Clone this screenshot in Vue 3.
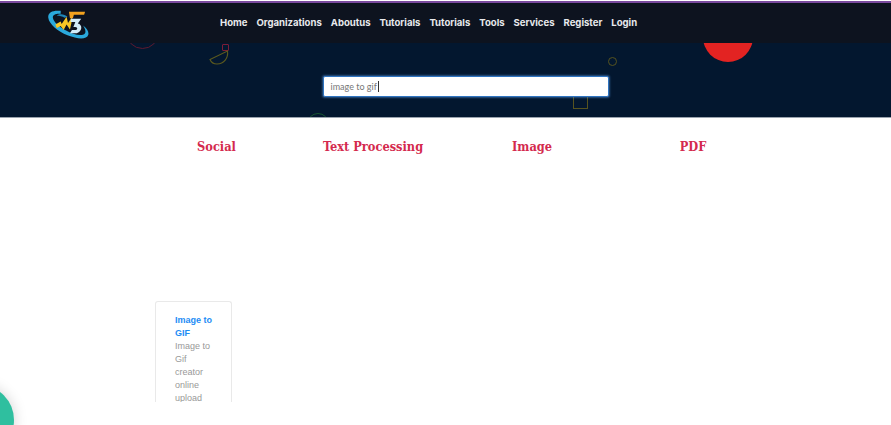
<script setup>
const links = ['Home', 'Organizations', 'Aboutus', 'Tutorials', 'Tutorials', 'Tools', 'Services', 'Register', 'Login']
const categories = ['Social', 'Text Processing', 'Image', 'PDF']
</script>

<template>
  <div class="page">
    <header class="nav">
      <svg class="logo" viewBox="0 0 42 30" aria-hidden="true">
        <path d="M13 0.5 C5 -0.5 -0.5 2 0.3 7.5 C1 14 10 21.5 20 25.5 C30 29.5 39.5 30.5 41.3 25 C42 22 40 18.5 36 15.5 C38.5 19.5 39.5 23 36.5 24.7 C32.5 26.5 25 24.5 18 20.5 C11 16.5 5.5 11.5 5 7.5 C4.7 4.5 8 3 13 3.5 Z" fill="#2aa9dc" />
        <path d="M9 5.5 C12 3 17 4 20 6.5 L17 7.5 C14.5 6 12 5.5 9 5.5 Z" fill="#1f86b8" />
        <path d="M7.5 14.5 L13 11.5 L14 14 L19 6.5 L20.5 13 L24.5 7 L24 13 L22.5 19.5 L19 14.5 L16 20 L13 16 L9 18 Z" fill="#f8c726" />
        <path d="M21.5 1.5 H38 L37 4.5 H26.5 L25.5 8 H22.5 Z" fill="#f3a21f" />
        <path d="M23.5 8.5 H34 L30.5 13.5 C35.5 14.5 35.5 21.5 29.5 23.5 H22.5 L24.5 20 H28.5 C30.5 20 30.5 17 28 17 H26 L28 12 H23 Z" fill="#d3ecf9" />
      </svg>
      <nav class="links">
        <a v-for="(link, i) in links" :key="i" class="link">{{ link }}</a>
      </nav>
    </header>

    <section class="hero">
      <span class="shape arc"></span>
      <span class="shape tiny-square"></span>
      <svg class="shape half" viewBox="0 0 20 15" aria-hidden="true">
        <path d="M18.5 1 C19.5 8 15 14 8 14 C4.5 14 2 12 1 9.5 Z" fill="none" stroke="#5c5a1e" stroke-width="1.1" />
      </svg>
      <span class="shape ring"></span>
      <span class="shape square"></span>
      <span class="shape sun"></span>
      <span class="shape green-arc"></span>
      <div class="search">
        <span class="query">image to gif</span><span class="caret"></span>
      </div>
    </section>

    <main class="content">
      <div class="categories">
        <h2 v-for="c in categories" :key="c" class="category">{{ c }}</h2>
      </div>
      <article class="card">
        <a class="card-title">Image to GIF</a>
        <p class="card-text">Image to Gif creator online upload</p>
      </article>
    </main>

    <span class="fab"></span>
  </div>
</template>

<style scoped>
.page {
  position: relative;
  width: 891px;
  height: 425px;
  box-sizing: border-box;
  padding-top: 1px;
  overflow: hidden;
  background: #fff;
  font-family: "Inter", "Liberation Sans", sans-serif;
}
.nav {
  display: flex;
  align-items: center;
  height: 40px;
  padding-left: 48px;
  background: #0d131f;
  border-top: 2px solid #7a4a9e;
}
.logo {
  flex: none;
  width: 41px;
  height: 30px;
  margin-top: 4px;
}
.links {
  display: flex;
  gap: 9px;
  margin-left: 131px;
}
.link {
  color: #e8e9ec;
  font-size: 9.55px;
  font-weight: 700;
  line-height: 14px;
  white-space: nowrap;
}
.hero {
  position: relative;
  display: flex;
  justify-content: center;
  height: 75px;
  box-sizing: border-box;
  padding: 33px 0 0 40px;
  background: #03172f;
  border-bottom: 1px solid #9aa3ae;
  overflow: hidden;
}
.shape {
  position: absolute;
}
.arc {
  left: 126px;
  top: -27px;
  width: 33px;
  height: 33px;
  border: 1px solid #5e1a30;
  border-radius: 50%;
  box-sizing: border-box;
}
.tiny-square {
  left: 222px;
  top: 1px;
  width: 7px;
  height: 7px;
  border: 1px solid #7d1d36;
  border-radius: 1px;
  box-sizing: border-box;
}
.half {
  left: 209px;
  top: 7px;
  width: 20px;
  height: 15px;
}
.ring {
  left: 608px;
  top: 14px;
  width: 9px;
  height: 9px;
  border: 1.5px solid #56531f;
  border-radius: 50%;
  box-sizing: border-box;
}
.square {
  left: 573px;
  top: 50px;
  width: 15px;
  height: 16px;
  border: 1px solid #56531f;
  box-sizing: border-box;
}
.sun {
  left: 703px;
  top: -31px;
  width: 50px;
  height: 50px;
  border-radius: 50%;
  background: #e32322;
}
.green-arc {
  left: 307px;
  top: 70px;
  width: 22px;
  height: 22px;
  border: 1px solid #17552f;
  border-radius: 50%;
  box-sizing: border-box;
}
.search {
  position: relative;
  display: flex;
  align-items: center;
  width: 286px;
  height: 21px;
  box-sizing: border-box;
  padding-left: 7px;
  background: #fff;
  border: 1px solid #2f74c0;
  border-radius: 2px;
  box-shadow: 0 0 2px 1px rgba(90, 160, 240, 0.45);
}
.query {
  color: #777;
  font-family: "Lato", sans-serif;
  font-size: 9px;
}
.caret {
  width: 1px;
  height: 11px;
  margin-left: 1px;
  background: #333;
}
.categories {
  display: grid;
  grid-template-columns: 157px 156px 162px 160px;
  margin: 20px 0 0 138px;
}
.category {
  margin: 0;
  color: #d42a4e;
  font-family: "DejaVu Serif Condensed", "DejaVu Serif", serif;
  font-stretch: condensed;
  font-size: 12.7px;
  font-weight: 700;
  line-height: 18px;
  text-align: center;
  white-space: nowrap;
}
.card {
  width: 77px;
  height: 101px;
  margin: 145px 0 0 155px;
  box-sizing: border-box;
  padding: 12px 18px 0 19px;
  border: 1px solid #e9e9e9;
  border-bottom: 0;
  border-radius: 3px 3px 0 0;
  overflow: hidden;
}
.card-title {
  display: block;
  color: #1e8cf5;
  font-family: "Liberation Sans", sans-serif;
  font-size: 9px;
  font-weight: 700;
  line-height: 13px;
}
.card-text {
  margin: 0;
  color: #999;
  font-family: "Liberation Sans", sans-serif;
  font-size: 9px;
  line-height: 13px;
}
.fab {
  position: absolute;
  left: -56px;
  top: 385px;
  width: 70px;
  height: 70px;
  border-radius: 50%;
  background: #2fbf9f;
  box-shadow: 0 0 14px rgba(0, 0, 0, 0.18);
}
</style>
